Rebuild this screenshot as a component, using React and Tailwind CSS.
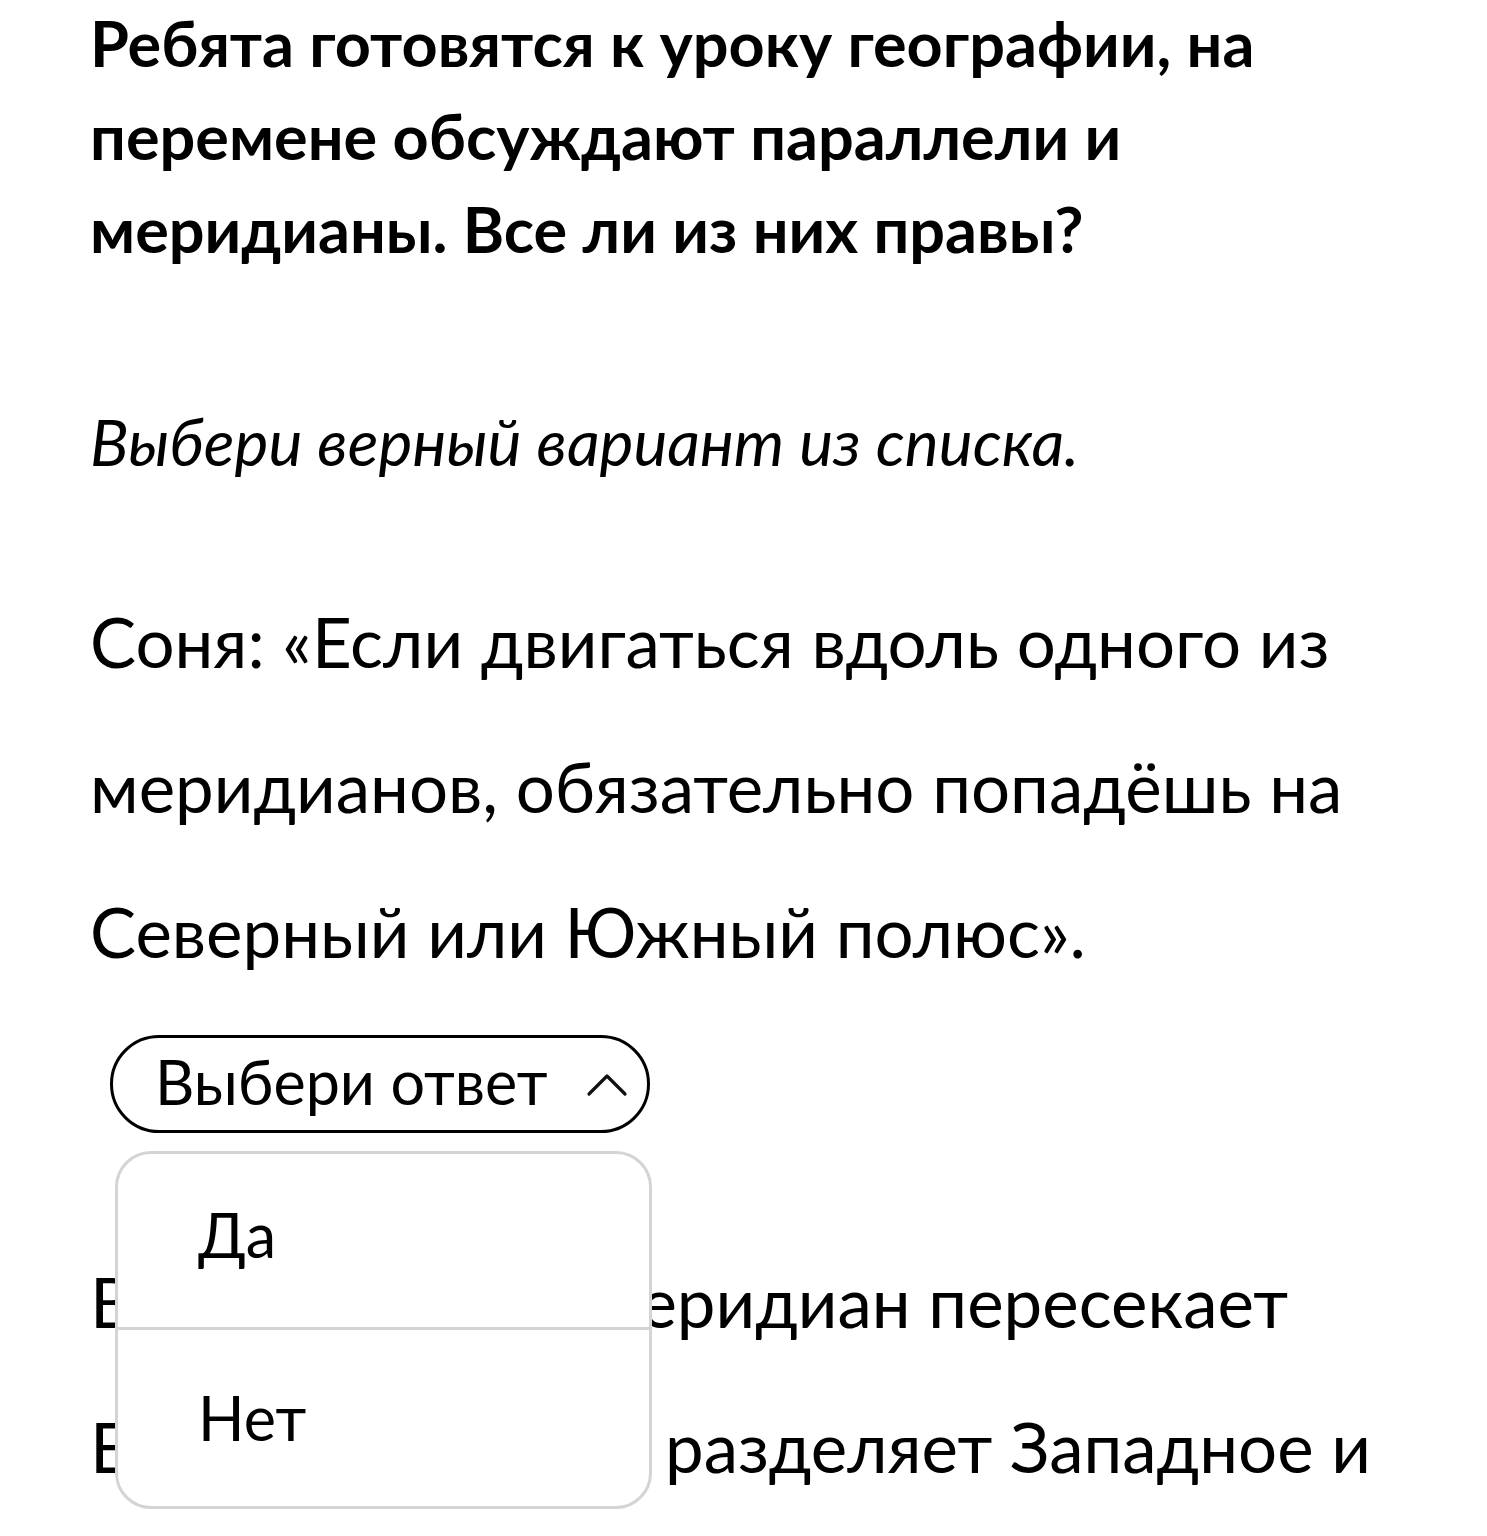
const font = { fontFamily: 'Lato, "Noto Sans", sans-serif' };

function ChevronUp() {
  return (
    <svg width="42" height="26" viewBox="0 0 42 26" fill="none" className="shrink-0">
      <path d="M3 23 L21 5 L39 23" stroke="#111" strokeWidth="3.2" strokeLinecap="round" strokeLinejoin="round" />
    </svg>
  );
}

function AnswerSelect() {
  const options = ['Да', 'Нет'];
  return (
    <div className="relative ml-[20px] mt-[31px] w-[540px]">
      <button
        type="button"
        className="flex h-[98px] w-full items-center justify-between rounded-full border-[3px] border-black bg-white pl-[42px] pr-[19px] text-[61px] leading-none text-black"
      >
        <span className="-mt-[6px]">Выбери ответ</span>
        <ChevronUp />
      </button>

      <div className="absolute left-[5px] top-full z-10 mt-[18px] w-[537px] overflow-hidden rounded-[36px] border-[3px] border-[#d4d4d4] bg-white">
        {options.map((opt, i) => (
          <div
            key={opt}
            className={`flex h-[176px] items-center pl-[80px] text-[61px] text-black ${i === 0 ? 'border-b-[3px] border-[#d4d4d4]' : ''}`}
          >
            <span className={i === 0 ? '-mt-[12px]' : ''}>{opt}</span>
          </div>
        ))}
      </div>
    </div>
  );
}

export default function App() {
  return (
    <div style={font} className="min-h-screen bg-white pl-[90px] pr-[97px] text-black">
      <h1 className="-mt-[4px] text-[63px] font-bold leading-[93px]">
        Ребята готовятся к уроку географии, на перемене обсуждают параллели и меридианы. Все ли из них правы?
      </h1>

      <p className="mt-[120px] text-[64px] italic leading-[93px]">Выбери верный вариант из списка.</p>

      <p className="mt-[81px] text-[69px] leading-[145px]">
        Соня: «Если двигаться вдоль одного из меридианов, обязательно попадёшь на Северный или Южный полюс».
      </p>

      <AnswerSelect />

      <p className="mt-[96px] text-[69px] leading-[145px]">
        Вася: «Нулевой меридиан пересекает Европу и Африку, разделяет Западное и Восточное полушария».
      </p>
    </div>
  );
}
